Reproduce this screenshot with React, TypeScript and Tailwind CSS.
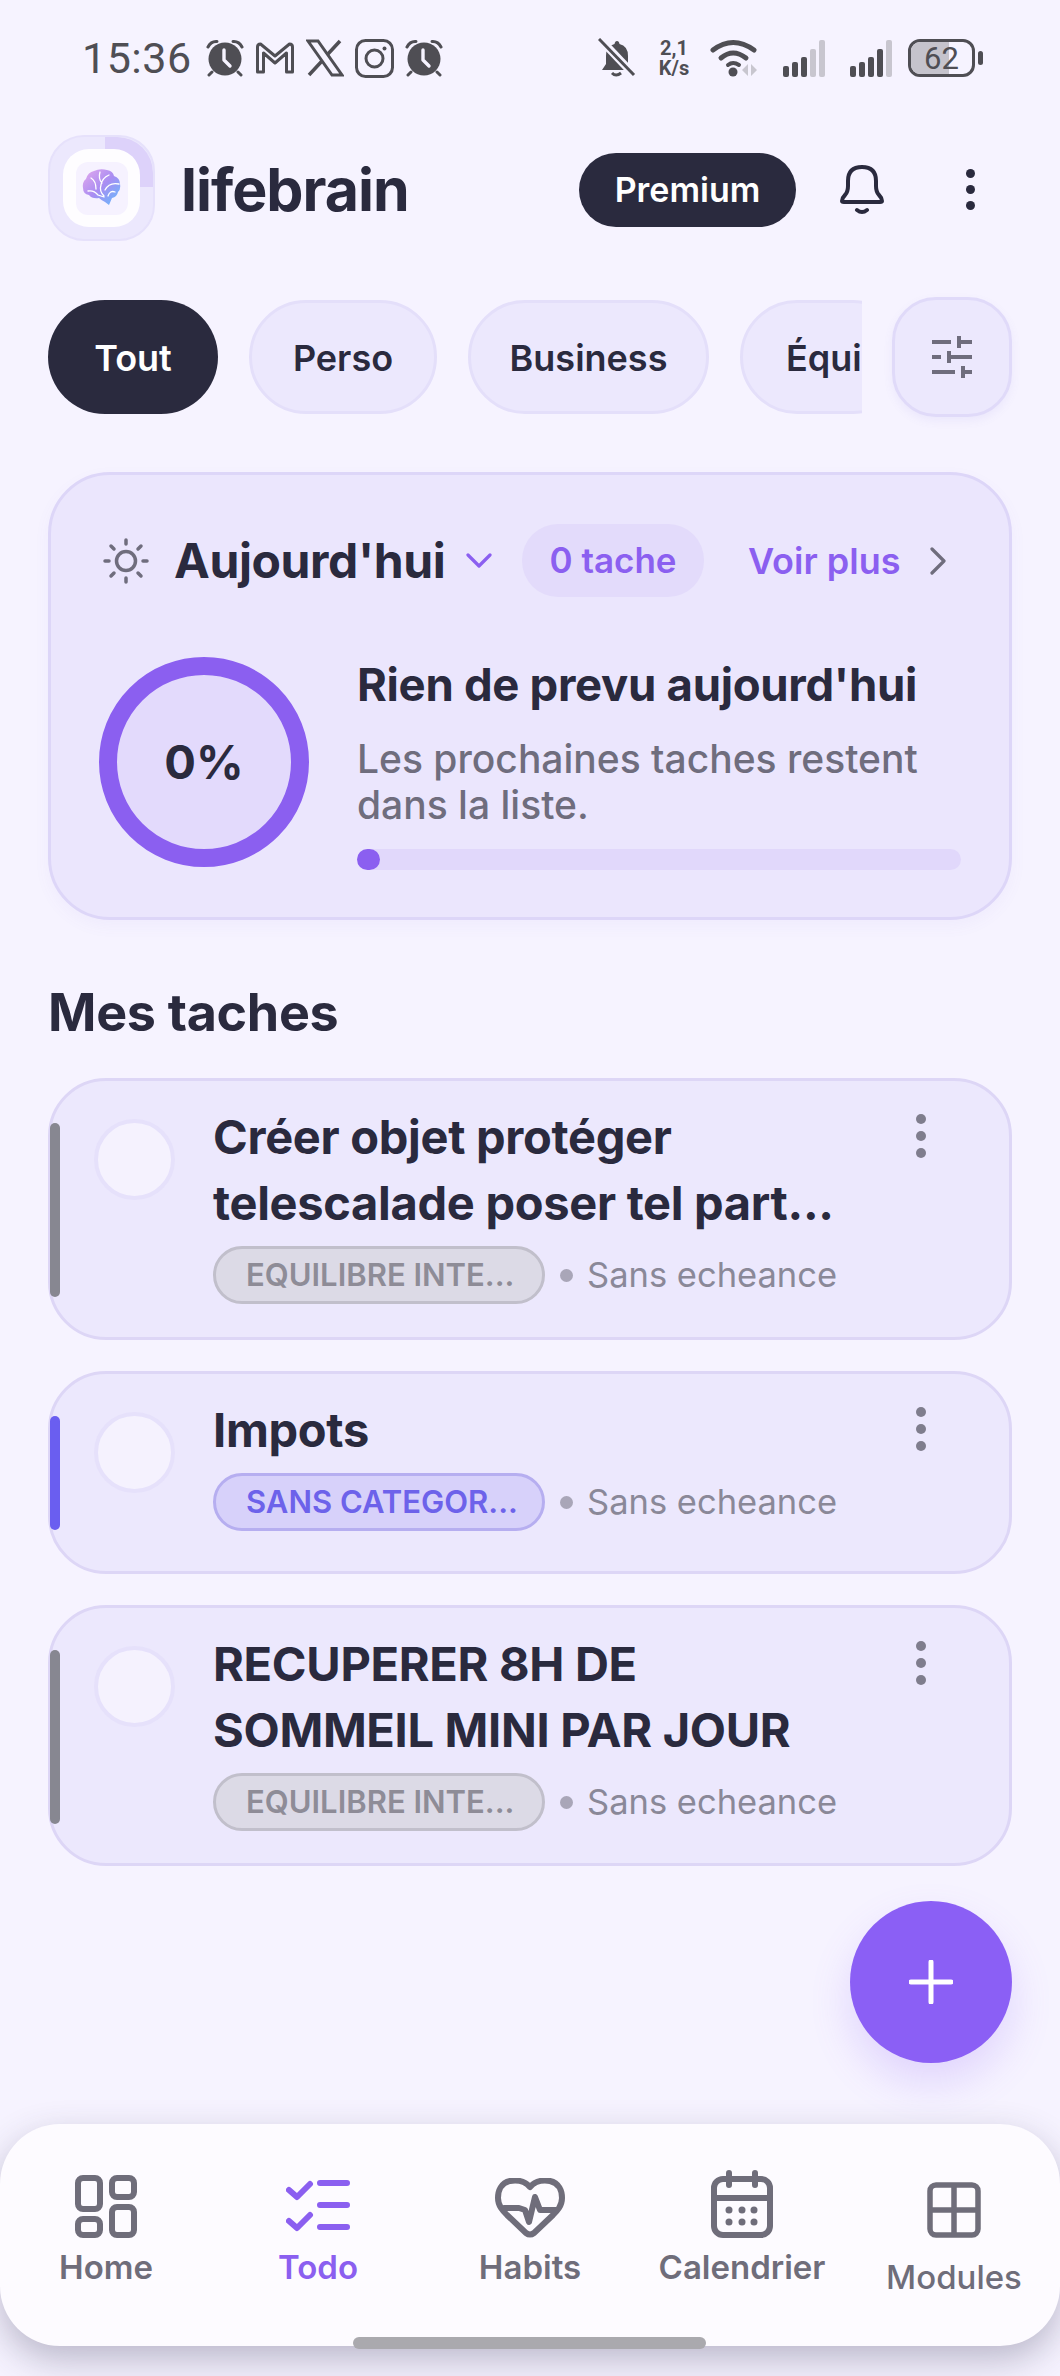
import React from "react";

const F = { fontFamily: "Inter, 'Liberation Sans', sans-serif" };

function Alarm() {
  return (
    <svg width="38" height="38" viewBox="0 0 38 38" fill="none">
      <circle cx="19" cy="20" r="16.5" fill="#4f4e54" />
      <path d="M2 8 Q5 2 11 2.5 M36 8 Q33 2 27 2.5" stroke="#4f4e54" strokeWidth="3" strokeLinecap="round" />
      <path d="M6 33 L3 36 M32 33 L35 36" stroke="#4f4e54" strokeWidth="3" strokeLinecap="round" />
      <path d="M18 11 V21 L24 27" stroke="#f6f3ff" strokeWidth="3.4" strokeLinecap="round" strokeLinejoin="round" />
    </svg>
  );
}

function Bars({ lit, className }: { lit: number; className: string }) {
  const hs = [11, 15, 20, 28, 37];
  return (
    <div className={"flex items-end gap-[3px] h-[38px] " + className}>
      {hs.map((h, i) => (
        <div
          key={i}
          className={"w-[6px] rounded-[2px] " + (i < lit ? "bg-[#4f4e54]" : "bg-[#c8c6cf]")}
          style={{ height: h }}
        />
      ))}
    </div>
  );
}

function StatusBar() {
  return (
    <div className="flex items-center justify-between h-[40px] mt-[38px] pl-[82px] pr-[77px] text-[#4f4e54]">
      <div className="flex items-center">
        <span className="text-[43px] leading-[40px] tracking-[0.5px] w-[124px]" style={{ fontFamily: "Roboto, sans-serif" }}>15:36</span>
        <div className="flex items-center gap-[11px]">
          <Alarm />
          <svg width="40" height="32" viewBox="0 0 39 32" fill="none" stroke="#4f4e54" strokeWidth="3">
            <path d="M2 30 V5 Q2 2 5 2 L19.5 14 L34 2 Q37 2 37 5 V30 H31 V11 L19.5 21 L8 11 V30 Z" strokeLinejoin="round" />
          </svg>
          <svg width="38" height="38" viewBox="0 0 38 38" fill="none" stroke="#4f4e54">
            <path d="M2 2 H12 L36 36 H26 Z" strokeWidth="3" />
            <path d="M34 2 L21 16 M16 22 L3 36" strokeWidth="3.5" />
          </svg>
          <svg width="39" height="39" viewBox="0 0 39 39" fill="none" stroke="#4f4e54" strokeWidth="3">
            <rect x="1.5" y="1.5" width="36" height="36" rx="9" />
            <circle cx="19.5" cy="19.5" r="8.5" />
            <circle cx="29.5" cy="9.5" r="2" fill="#4f4e54" stroke="none" />
          </svg>
          <Alarm />
        </div>
      </div>
      <div className="flex items-center">
        <svg width="38" height="40" viewBox="0 0 38 40" fill="none">
          <path d="M19 3 Q21 3 21.5 6 Q30 8 30 18 V26 L34 32 H4 L8 26 V18 Q8 8 16.5 6 Q17 3 19 3 Z" fill="#4f4e54" />
          <path d="M14 35 Q18 39 23 35" stroke="#4f4e54" strokeWidth="3" />
          <path d="M2 1 L37 38" stroke="#f6f3ff" strokeWidth="8" />
          <path d="M1 1 L36 37" stroke="#4f4e54" strokeWidth="3" />
        </svg>
        <div className="ml-[18px] w-[40px] flex flex-col items-center text-[20px] leading-[20px] font-bold" style={{ fontFamily: "Roboto, sans-serif" }}>
          <span>2,1</span>
          <span>K/s</span>
        </div>
        <svg className="ml-[16px]" width="49" height="38" viewBox="0 0 49 38" fill="none">
          <path d="M3 11 Q23 -4 44 11" stroke="#4f4e54" strokeWidth="5" strokeLinecap="round" />
          <path d="M11 19 Q23 9 36 19" stroke="#4f4e54" strokeWidth="5" strokeLinecap="round" />
          <path d="M18 26 Q23 22 29 26" stroke="#4f4e54" strokeWidth="4" strokeLinecap="round" />
          <circle cx="23" cy="33" r="4.5" fill="#4f4e54" />
          <path d="M38 25 V37 L32 31 Z M41 25 V37 L47 31 Z" fill="#c8c6cf" />
        </svg>
        <Bars lit={3} className="ml-[24px]" />
        <Bars lit={4} className="ml-[25px]" />
        <div className="ml-[16px] relative w-[67px] h-[38px] rounded-[12px] border-[3px] border-[#4f4e54] overflow-hidden flex items-center justify-center">
          <div className="absolute left-0 top-0 bottom-0 w-[62%] bg-[#c5c3cc]" />
          <span className="relative text-[31px] leading-none" style={{ fontFamily: "Roboto, sans-serif" }}>62</span>
        </div>
        <div className="ml-[3px] w-[5px] h-[14px] rounded-[3px] bg-[#4f4e54]" />
      </div>
    </div>
  );
}

function Brain() {
  return (
    <svg width="40" height="38" viewBox="0 0 40 38">
      <defs>
        <linearGradient id="br" x1="0.1" y1="0.1" x2="0.9" y2="0.9">
          <stop offset="0" stopColor="#d9a4ee" />
          <stop offset="0.5" stopColor="#a98df2" />
          <stop offset="1" stopColor="#6fb4fb" />
        </linearGradient>
      </defs>
      <path d="M12 2 Q18 -1 25 1 Q31 2 32 7 Q38 9 38 15 Q39 20 36 23 Q35 28 30 29 L27 36 L23 33 Q19 31 17 29 Q10 30 7 26 Q1 25 1 19 Q0 13 4 10 Q6 3 12 2 Z" fill="url(#br)" />
      <path d="M9 9 Q14 12 14 20 M18 3 Q16 10 20 14 M27 6 Q20 9 19 16 Q17 22 22 27 M37 15 Q27 13 23 21 M6 22 Q12 21 16 26 L22 28 M33 23 Q28 21 26 27" fill="none" stroke="#ffffff" strokeWidth="1.3" strokeLinecap="round" />
    </svg>
  );
}

function Header() {
  return (
    <div className="flex items-center mt-[57px] pl-[48px] pr-[85px]">
      <div className="relative w-[107px] h-[106px] rounded-[36px] bg-[#ece8fd] border-[2px] border-[#e6e1fb] flex items-center justify-center overflow-hidden">
        <div className="absolute right-0 top-0 w-[48px] h-[50px] bg-[#ddd2fa] rounded-tr-[36px] rounded-bl-[4px]" />
        <div className="relative w-[77px] h-[78px] rounded-[26px] bg-[#fefdff] flex items-center justify-center">
          <div className="w-[52px] h-[53px] rounded-[12px] bg-[#f6f2ff] flex items-center justify-center">
            <Brain />
          </div>
        </div>
      </div>
      <div className="ml-[26px] mt-[4px] text-[59px] leading-[70px] font-bold text-[#2a2a3e] tracking-[-1px]">lifebrain</div>
      <div className="ml-auto mt-[3px] w-[217px] h-[74px] rounded-full bg-[#2a2a3e] text-white text-[34px] font-semibold flex items-center justify-center">Premium</div>
      <svg className="ml-[43px] mt-[3px]" width="46" height="50" viewBox="0 0 46 50" fill="none" stroke="#2a2a3e" strokeWidth="4" strokeLinecap="round" strokeLinejoin="round">
        <path d="M3 36 Q3 33 6 30 Q9 27 9 21 V16 Q9 2 23 2 Q37 2 37 16 V21 Q37 27 40 30 Q43 33 43 36 Q43 37 41 37 H5 Q3 37 3 36 Z" />
        <path d="M18 45 Q23 49 28 45" />
      </svg>
      <div className="ml-[81px] mt-[3px] flex flex-col gap-[7px]">
        <div className="w-[9px] h-[9px] rounded-full bg-[#2a2a3e]" />
        <div className="w-[9px] h-[9px] rounded-full bg-[#2a2a3e]" />
        <div className="w-[9px] h-[9px] rounded-full bg-[#2a2a3e]" />
      </div>
    </div>
  );
}

function Chip({ label, dark, w }: { label: string; dark?: boolean; w: string }) {
  return (
    <div
      className={
        "shrink-0 h-[114px] pt-[2px] rounded-[57px] flex items-center text-[36px] font-semibold " +
        w +
        (dark
          ? " bg-[#2a2a3e] text-white justify-center"
          : " bg-[#ece8fd] border-[3px] border-[#e4dffa] text-[#2a2a3e] justify-center")
      }
    >
      {label}
    </div>
  );
}

function Chips() {
  return (
    <div className="flex items-center mt-[56px] pl-[48px] pr-[48px]">
      <div className="w-[814px] overflow-hidden flex gap-[31px]">
        <Chip label="Tout" dark w="w-[170px]" />
        <Chip label="Perso" w="w-[188px]" />
        <Chip label="Business" w="w-[241px]" />
        <div className="shrink-0 h-[114px] pt-[2px] w-[170px] pl-[43px] rounded-[57px] flex items-center text-[36px] font-semibold bg-[#ece8fd] border-[3px] border-[#e4dffa] text-[#2a2a3e]">
          Équipe
        </div>
      </div>
      <div className="ml-[30px] w-[120px] h-[120px] rounded-[44px] bg-[#ece8fd] border-[3px] border-[#e0daf9] flex items-center justify-center shadow-[0_4px_10px_rgba(120,100,220,0.08)]">
        <svg width="42" height="42" viewBox="0 0 42 42" fill="none" stroke="#6f6d7d" strokeWidth="4">
          <path d="M1 6 H20 M28 6 H41 M28 0 V12 M1 21 H10 M18 21 H41 M18 15 V27 M1 36 H24 M32 36 H41 M32 30 V42" />
        </svg>
      </div>
    </div>
  );
}

function Sun() {
  return (
    <svg width="46" height="46" viewBox="0 0 46 46" fill="none" stroke="#6f6d7d" strokeWidth="3.5" strokeLinecap="round">
      <circle cx="23" cy="23" r="9.5" />
      <path d="M23 2 V6 M23 40 V44 M2 23 H6 M40 23 H44 M8 8 L11 11 M35 35 L38 38 M38 8 L35 11 M11 35 L8 38" />
    </svg>
  );
}

function TodayCard() {
  return (
    <div className="mt-[55px] mx-[48px] h-[448px] rounded-[62px] bg-[#ebe6fd] border-[3px] border-[#ddd6f8] pl-[48px] pr-[46px] pt-[49px] shadow-[0_6px_16px_rgba(120,100,220,0.05)]">
      <div className="flex items-center h-[73px]">
        <div className="ml-[4px]"><Sun /></div>
        <span className="ml-[25px] w-[270px] text-[48px] leading-[60px] font-bold text-[#2a2a3e] tracking-[-0.4px] whitespace-nowrap">Aujourd'hui</span>
        <svg className="ml-[22px]" width="26" height="16" viewBox="0 0 26 16" fill="none" stroke="#8b5ff0" strokeWidth="3.2" strokeLinecap="round" strokeLinejoin="round">
          <path d="M2 2 L13 13 L24 2" />
        </svg>
        <div className="ml-[30px] w-[182px] h-[73px] rounded-[36px] bg-[#e3dbfb] text-[#8b5ff0] text-[35px] font-semibold flex items-center justify-center">0 tache</div>
        <span className="ml-[44px] text-[36px] font-semibold text-[#8b5ff0] whitespace-nowrap">Voir plus</span>
        <svg className="ml-[28px]" width="18" height="28" viewBox="0 0 18 28" fill="none" stroke="#6f6d7d" strokeWidth="3.2" strokeLinecap="round" strokeLinejoin="round">
          <path d="M3 2 L15 14 L3 26" />
        </svg>
      </div>
      <div className="flex mt-[60px]">
        <div className="shrink-0 w-[210px] h-[210px] rounded-full bg-[#e3dafc] border-[18px] border-[#8b5ff0] flex items-center justify-center text-[47px] font-bold text-[#2a2a3e]">0%</div>
        <div className="ml-[48px] flex-1 min-w-0">
          <div className="text-[45.5px] leading-[56px] font-bold text-[#2a2a3e] tracking-[-0.3px] whitespace-nowrap">Rien de prevu aujourd'hui</div>
          <div className="mt-[23px] text-[39px] leading-[46px] font-medium text-[#6f6d7d] whitespace-nowrap">
            Les prochaines taches restent
            <br />
            dans la liste.
          </div>
          <div className="mt-[21px] h-[21px] w-[604px] rounded-full bg-[#e1d8fb]">
            <div className="w-[23px] h-[21px] rounded-full bg-[#8b5ff0]" />
          </div>
        </div>
      </div>
    </div>
  );
}

function TaskCard({
  lines,
  badge,
  bar,
  badgeCls,
  h,
  barCls,
}: {
  lines: string[];
  badge: string;
  bar: string;
  badgeCls: string;
  h: string;
  barCls: string;
}) {
  return (
    <div className={"relative mx-[48px] rounded-[58px] bg-[#ece8fd] border-[3px] border-[#ddd6f6] flex pl-[43px] pt-[38px] " + h}>
      <div className={"absolute left-[-1px] w-[10px] rounded-[5px] " + barCls + " " + bar} />
      <div className="shrink-0 w-[81px] h-[81px] rounded-full bg-[#f5f2fe] border-[4px] border-[#e6e1fb]" />
      <div className="ml-[38px] flex-1 min-w-0">
        <div className="-mt-[15px] text-[47px] leading-[66px] font-bold text-[#2a2a3e] tracking-[-0.3px] whitespace-nowrap">
          {lines.map((l) => (
            <div key={l}>{l}</div>
          ))}
        </div>
        <div className="flex items-center mt-[10px]">
          <div className={"w-[332px] h-[58px] rounded-full border-[3px] flex items-center pl-[30px] text-[31px] font-semibold whitespace-nowrap " + badgeCls}>{badge}</div>
          <div className="ml-[15px] w-[13px] h-[13px] rounded-full bg-[#a9a6b8]" />
          <span className="ml-[14px] text-[34.5px] text-[#8a8898] whitespace-nowrap">Sans echeance</span>
        </div>
      </div>
      <div className="absolute right-[83px] top-[33px] flex flex-col gap-[7px]">
        <div className="w-[10px] h-[10px] rounded-full bg-[#7f7d8d]" />
        <div className="w-[10px] h-[10px] rounded-full bg-[#7f7d8d]" />
        <div className="w-[10px] h-[10px] rounded-full bg-[#7f7d8d]" />
      </div>
    </div>
  );
}

const grayBadge = "bg-[#dcdae6] border-[#c1bfcb] text-[#8e8c97]";
const blueBadge = "bg-[#d7d1fa] border-[#b6aef0] text-[#6d62ea]";

function Tasks() {
  return (
    <div>
      <div className="mt-[62px] ml-[48px] text-[52px] leading-[62px] font-bold text-[#2a2a3e] tracking-[-0.3px]">Mes taches</div>
      <div className="mt-[34px] flex flex-col gap-[31px]">
        <TaskCard lines={["Créer objet protéger", "telescalade poser tel part..."]} badge="EQUILIBRE INTE..." badgeCls={grayBadge} bar="bg-[#878791]" barCls="top-[42px] h-[174px]" h="h-[262px]" />
        <TaskCard lines={["Impots"]} badge="SANS CATEGOR..." badgeCls={blueBadge} bar="bg-[#6a5ef0]" barCls="top-[42px] h-[114px]" h="h-[203px]" />
        <TaskCard lines={["RECUPERER 8H DE", "SOMMEIL MINI PAR JOUR"]} badge="EQUILIBRE INTE..." badgeCls={grayBadge} bar="bg-[#878791]" barCls="top-[42px] h-[174px]" h="h-[261px]" />
      </div>
    </div>
  );
}

function NavItem({ label, color, low, children }: { label: string; color: string; low?: boolean; children: React.ReactNode }) {
  return (
    <div className={"flex flex-col items-center " + (low ? "pt-[58px]" : "pt-[48px]")}>
      <div className={"flex items-end " + (low ? "h-[56px]" : "h-[66px]")}>{children}</div>
      <div className={"text-[33px] leading-[40px] " + (low ? "mt-[19px] font-medium" : "mt-[9px] font-semibold")} style={{ color }}>{label}</div>
    </div>
  );
}

function Nav() {
  const gray = "#6f6d7a";
  const purple = "#8b5ff0";
  return (
    <div className="mt-auto mb-[30px] h-[222px] rounded-[60px] bg-[#fdfbff] grid grid-cols-5 shadow-[0_14px_36px_rgba(50,45,80,0.3)]">
      <NavItem label="Home" color={gray}>
        <svg width="62" height="63" viewBox="0 0 62 63" fill="none" stroke={gray} strokeWidth="6">
          <rect x="3" y="3" width="22" height="31" rx="5" />
          <rect x="37" y="3" width="22" height="19" rx="5" />
          <rect x="3" y="44" width="22" height="16" rx="5" />
          <rect x="37" y="32" width="22" height="28" rx="5" />
        </svg>
      </NavItem>
      <NavItem label="Todo" color={purple}>
        <svg className="mb-[3px]" width="64" height="58" viewBox="0 0 64 58" fill="none" stroke={purple} strokeWidth="6" strokeLinecap="round" strokeLinejoin="round">
          <path d="M3 13 L11 20 L24 7 M3 44 L11 51 L24 38" />
          <path d="M34 6 H61 M34 28 H61 M34 50 H61" />
        </svg>
      </NavItem>
      <NavItem label="Habits" color={gray}>
        <svg width="70" height="60" viewBox="0 0 70 60" fill="none" stroke={gray} strokeWidth="6" strokeLinecap="round" strokeLinejoin="round">
          <path d="M35 9 C29 2 21 2 15 3 C6 5 3 13 3 20 C3 28 8 33 12 37 L31 55 Q35 58 39 55 L58 37 C62 33 67 28 67 20 C67 13 64 5 55 3 C49 2 41 2 35 9 Z" />
          <path d="M9 30 H24 L30 32 L34 44 L40 19 L45 32 H61" />
        </svg>
      </NavItem>
      <NavItem label="Calendrier" color={gray}>
        <svg width="62" height="68" viewBox="0 0 62 68" fill="none" stroke={gray} strokeWidth="6" strokeLinecap="round">
          <rect x="3" y="9" width="56" height="56" rx="9" />
          <path d="M3 28 H59" />
          <path d="M18 3 V15 M44 3 V15" />
          <g fill={gray} stroke="none">
            <circle cx="18" cy="40" r="3.5" />
            <circle cx="31" cy="40" r="3.5" />
            <circle cx="43" cy="40" r="3.5" />
            <circle cx="18" cy="52" r="3.5" />
            <circle cx="31" cy="52" r="3.5" />
            <circle cx="43" cy="52" r="3.5" />
          </g>
        </svg>
      </NavItem>
      <NavItem label="Modules" color={gray} low>
        <svg width="54" height="56" viewBox="0 0 54 56" fill="none" stroke={gray} strokeWidth="5.5">
          <rect x="3" y="3" width="48" height="50" rx="6" />
          <path d="M27 3 V53 M3 28 H51" />
        </svg>
      </NavItem>
    </div>
  );
}

export default function App() {
  return (
    <div className="relative w-[1060px] h-[2376px] overflow-hidden bg-[#f6f3ff] flex flex-col" style={F}>
      <StatusBar />
      <Header />
      <Chips />
      <TodayCard />
      <Tasks />
      <Nav />
      <button className="absolute left-[850px] top-[1901px] w-[162px] h-[162px] rounded-full bg-[#8b5ff5] flex items-center justify-center shadow-[0_20px_40px_rgba(139,95,245,0.2)]">
        <svg width="44" height="44" viewBox="0 0 44 44" fill="none" stroke="#fff" strokeWidth="5" strokeLinecap="round">
          <path d="M22 2 V42 M2 22 H42" />
        </svg>
      </button>
      <div className="absolute left-[353px] top-[2337px] w-[353px] h-[12px] rounded-full bg-[#aaa9ae]" />
    </div>
  );
}
